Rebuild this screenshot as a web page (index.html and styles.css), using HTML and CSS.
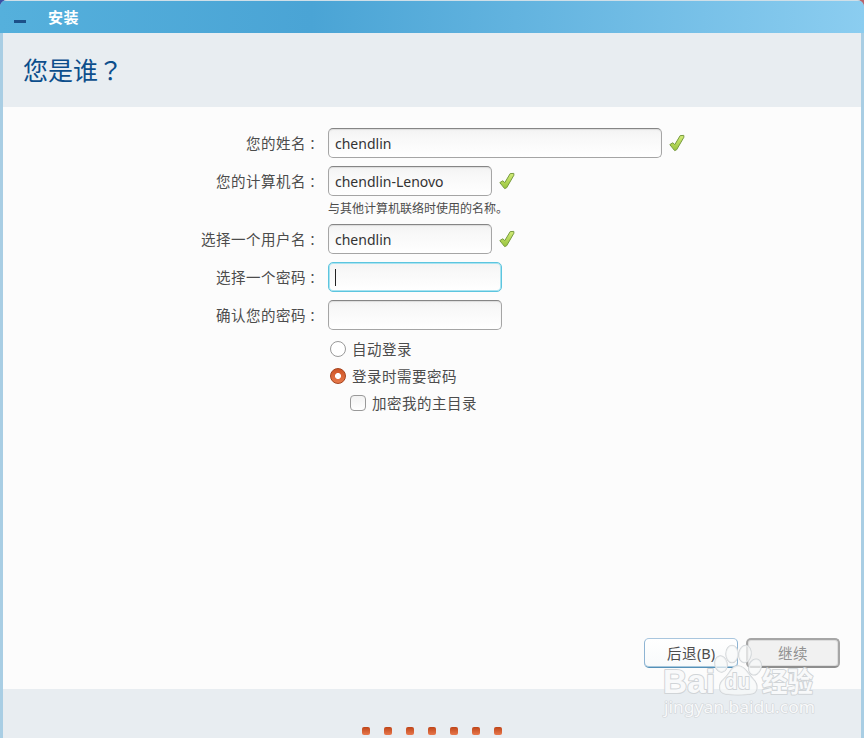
FILE: index.html
```html
<!DOCTYPE html>
<html lang="zh-CN">

<head>
    <meta charset="UTF-8">
    <meta name="viewport" content="width=device-width, initial-scale=1.0">
    <title>安装</title>
    <link rel="stylesheet" href="styles.css">
</head>

<body>
    <svg class="defs" width="0" height="0">
        <defs>
            <linearGradient id="green" x1="0" y1="0" x2="0" y2="1">
                <stop offset="0" stop-color="#d3ec78" />
                <stop offset="1" stop-color="#98c43c" />
            </linearGradient>
            <symbol id="check" viewBox="0 0 16 18">
                <path d="M0.8 10.6 L3.8 8.8 L5.8 10.6 L11.2 1.6 L14.8 1.4 L14.9 3.2 L7.6 15.8 L5.6 16.6 Z" fill="url(#green)" stroke="#789b40" stroke-width="1" stroke-linejoin="round" />
            </symbol>
        </defs>
    </svg>
    <div class="window">
        <div class="titlebar">
            <span class="min"></span>
            <span class="name">安装</span>
        </div>
        <div class="header">
            <h1>您是谁<span class="punc" lang="zh-TW">？</span></h1>
        </div>
        <div class="main">
            <form class="form">
                <div class="row">
                    <label for="fullname">您的姓名<span class="punc" lang="zh-TW">：</span></label>
                    <input type="text" id="fullname" class="long" value="chendlin">
                    <svg class="ok"><use href="#check" /></svg>
                </div>
                <div class="row">
                    <label for="host">您的计算机名<span class="punc" lang="zh-TW">：</span></label>
                    <input type="text" id="host" value="chendlin-Lenovo">
                    <svg class="ok"><use href="#check" /></svg>
                </div>
                <p class="tip">与其他计算机联络时使用的名称。</p>
                <div class="row">
                    <label for="user">选择一个用户名<span class="punc" lang="zh-TW">：</span></label>
                    <input type="text" id="user" value="chendlin">
                    <svg class="ok"><use href="#check" /></svg>
                </div>
                <div class="row">
                    <label for="pwd">选择一个密码<span class="punc" lang="zh-TW">：</span></label>
                    <span class="pwd-box">
                        <input type="password" id="pwd" class="pwd active">
                        <i class="caret"></i>
                    </span>
                </div>
                <div class="row">
                    <label for="pwd2">确认您的密码<span class="punc" lang="zh-TW">：</span></label>
                    <input type="password" id="pwd2" class="pwd">
                </div>
                <div class="options">
                    <label class="option"><input type="radio" name="login">自动登录</label>
                    <label class="option"><input type="radio" name="login" checked>登录时需要密码</label>
                    <label class="option sub"><input type="checkbox">加密我的主目录</label>
                </div>
            </form>
            <div class="buttons">
                <button type="button" class="back">后退<span class="key">(B)</span></button>
                <button type="button" class="next" disabled>继续</button>
            </div>
        </div>
        <div class="footer">
            <i class="dot"></i>
            <i class="dot"></i>
            <i class="dot"></i>
            <i class="dot"></i>
            <i class="dot"></i>
            <i class="dot"></i>
            <i class="dot"></i>
        </div>
    </div>
    <svg class="watermark" viewBox="0 0 164 90" width="164" height="90">
        <text x="3" y="55" class="logo" textLength="52" lengthAdjust="spacingAndGlyphs">Bai</text>
        <g class="paw">
            <ellipse cx="61" cy="26" rx="6" ry="8" transform="rotate(-12 61 26)" />
            <ellipse cx="72" cy="16" rx="6" ry="8.5" />
            <ellipse cx="85" cy="16" rx="6" ry="8.5" transform="rotate(8 85 16)" />
            <ellipse cx="95" cy="29" rx="6" ry="8" transform="rotate(20 95 29)" />
            <path d="M78 28 C85 28 88 36 93 41 C99 47 98 56 90 56 C84 57 72 57 66 56 C58 55 58 46 64 41 C70 36 71 28 78 28 Z" />
        </g>
        <text x="65" y="51" class="du" textLength="25" lengthAdjust="spacingAndGlyphs">du</text>
        <text x="102" y="54" class="jy" textLength="51" lengthAdjust="spacingAndGlyphs">经验</text>
        <text x="4" y="75" class="url" textLength="151" lengthAdjust="spacingAndGlyphs">jingyan.baidu.com</text>
    </svg>
</body>

</html>
```
FILE: styles.css
```css
* {
    padding: 0;
    margin: 0;
    box-sizing: border-box;
}

body {
    height: 738px;
    overflow: hidden;
    background: linear-gradient(90deg, #3b51a5 50%, #b8646c 50%);
    font: 14.5px/20px "Noto Sans", "Noto Sans CJK SC", sans-serif;
    letter-spacing: .5px;
    color: #4c4c4c;
}

.defs {
    display: block;
    height: 0;
}

.punc {
    font-family: "Noto Sans CJK TC", sans-serif;
}

.window {
    display: flex;
    flex-direction: column;
    height: 738px;
    overflow: hidden;
    border-radius: 7px 7px 0 0;
    background: #a9cee4;
}

.titlebar {
    display: flex;
    align-items: center;
    height: 33px;
    padding-left: 14px;
    border-top: 1px solid #cfdfe8;
    background: linear-gradient(90deg, #55b0dc, #4aa4d5 36%, #8bcdf0);
}

.min {
    width: 12px;
    height: 3px;
    margin-top: 8px;
    background: #1c5089;
}

.name {
    margin: 0 0 1px 22px;
    font-size: 15px;
    font-weight: bold;
    color: #fff;
}

.header {
    height: 74px;
    margin: 0 3px;
    padding: 18px 0 0 20px;
    background: #e8edf1;
}

h1 {
    font-size: 25px;
    line-height: 36px;
    font-weight: normal;
    letter-spacing: 0;
    color: #0c4e8c;
}

.main {
    display: flex;
    flex-direction: column;
    justify-content: space-between;
    height: 582px;
    margin: 0 3px;
    padding: 21px 21px 20px 0;
    background: #fcfcfc;
}

.row {
    display: flex;
    align-items: center;
    height: 30px;
    margin-bottom: 8px;
}

.row label {
    width: 318px;
    margin-right: 7px;
    text-align: right;
}

.row .punc {
    font-size: 13px;
    letter-spacing: 2px;
}

input[type="text"],
input[type="password"] {
    width: 164px;
    height: 30px;
    padding: 1px 6px 0;
    border: 1px solid #a5a5a5;
    border-top-color: #858585;
    border-radius: 5px;
    outline: none;
    background: linear-gradient(#f3f3f3, #f8f8f8 30%, #fff);
    box-shadow: inset 0 1px 1px #dcdcdc;
    font: 14px "Noto Sans", sans-serif;
    color: #333;
}

input.long {
    width: 334px;
}

input.pwd {
    display: block;
    width: 174px;
}

input.active {
    border-color: #5cc5df;
    box-shadow: inset 0 0 0 1px #a9e3f0;
}

.pwd-box {
    position: relative;
}

.caret {
    position: absolute;
    left: 7px;
    top: 7px;
    width: 1px;
    height: 17px;
    background: #222;
}

.ok {
    width: 16px;
    height: 18px;
    margin-left: 7px;
}

.tip {
    height: 28px;
    margin: -8px 0 0 325px;
    padding-top: 3px;
    font-size: 12px;
    letter-spacing: 0;
}

.options {
    padding: 1px 0 0 327px;
}

.option {
    display: flex;
    align-items: center;
    height: 20px;
    margin-bottom: 7px;
}

.sub {
    padding-left: 20px;
}

.option input {
    appearance: none;
    width: 16px;
    height: 16px;
    margin-right: 6px;
    border: 1px solid #999;
    border-radius: 4px;
    background: linear-gradient(#f2f2f2, #fff);
}

.option input[type="radio"] {
    border-radius: 50%;
    background: #fff;
}

.option input[type="radio"]:checked {
    border-color: #a5421c;
    background: radial-gradient(circle, #fff 2.6px, transparent 3.4px), linear-gradient(#cf5425, #e77a4c);
}

.buttons {
    display: flex;
    justify-content: flex-end;
    gap: 8px;
    height: 31px;
}

.buttons button {
    width: 94px;
    height: 30px;
    padding-bottom: 2px;
    border-radius: 5px;
    font: 14.5px "Noto Sans", "Noto Sans CJK SC", sans-serif;
    letter-spacing: .5px;
}

.buttons .key {
    letter-spacing: 0;
}

.back {
    border: 1px solid #8eb4d3;
    border-top-color: #a9c6de;
    border-bottom-color: #5490b8;
    background: linear-gradient(#fff, #f8fafb);
    box-shadow: inset 0 -1px 0 #a8c8dc;
    color: #4c4c4c;
}

.next {
    border: 2px solid #a6a6a6;
    border-bottom-color: #8e8e8e;
    background: #f1f1f1;
    box-shadow: inset 0 0 0 1px #ddd;
    color: #929292;
}

.footer {
    display: flex;
    justify-content: center;
    align-items: flex-end;
    gap: 14px;
    height: 49px;
    margin: 0 3px;
    padding-bottom: 3px;
    background: #e8edf1;
}

.dot {
    width: 8px;
    height: 8px;
    border-radius: 2px;
    background: linear-gradient(#bf4518, #e8784d);
}

.watermark {
    position: absolute;
    left: 660px;
    top: 638px;
    letter-spacing: 0;
    fill: #f8f9fa;
    stroke: #d0d4d7;
    stroke-width: 2px;
    stroke-linejoin: round;
    paint-order: stroke;
}

.paw {
    fill-opacity: .7;
    stroke-width: 1.5px;
}

.logo {
    font: bold 34px "Liberation Sans", sans-serif;
}

.du {
    font: bold 22px "Liberation Sans", sans-serif;
}

.jy {
    font: bold 27px "Noto Sans CJK SC", sans-serif;
}

.url {
    font: 17px "Noto Sans", sans-serif;
    stroke-width: 1.2px;
}
```
